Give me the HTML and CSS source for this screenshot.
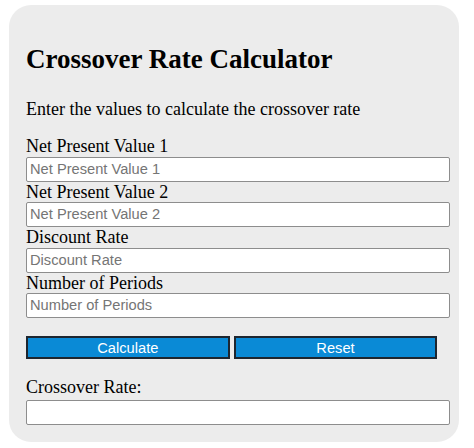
FILE: index.html
```html
<!DOCTYPE html>
<html lang="en">
<head>
    <meta charset="UTF-8">
    <meta name="viewport" content="width=device-width, initial-scale=1.0">
    <title>Crossover Rate Calculator</title>
    <link rel="stylesheet" href="styles.css">
</head>
<body>

    <div class="calculator">
        <h2>Crossover Rate Calculator</h2>
        <p class="intro">Enter the values to calculate the crossover rate</p>

        <div class="field">
            <label for="npv1">Net Present Value 1</label>
            <input type="number" id="npv1" placeholder="Net Present Value 1">
        </div>
        <div class="field">
            <label for="npv2">Net Present Value 2</label>
            <input type="number" id="npv2" placeholder="Net Present Value 2">
        </div>
        <div class="field">
            <label for="rate">Discount Rate</label>
            <input type="number" id="rate" placeholder="Discount Rate">
        </div>
        <div class="field">
            <label for="periods">Number of Periods</label>
            <input type="number" id="periods" placeholder="Number of Periods">
        </div>

        <div class="buttons">
            <button id="calculateButton">Calculate</button>
            <button id="resetButton">Reset</button>
        </div>

        <div class="field result">
            <label for="result">Crossover Rate:</label>
            <input type="text" id="result" readonly>
        </div>
    </div>

    <script>
        const npv1 = document.getElementById("npv1");
        const npv2 = document.getElementById("npv2");
        const rate = document.getElementById("rate");
        const periods = document.getElementById("periods");
        const result = document.getElementById("result");

        // Rate at which the two NPVs are equal (simple approximation)
        function calculate() {
            const a = parseFloat(npv1.value);
            const b = parseFloat(npv2.value);
            const r = parseFloat(rate.value) / 100;
            const n = parseFloat(periods.value);
            if ([a, b, r, n].some(isNaN) || n === 0 || b === 0) {
                result.value = "";
                return;
            }
            const crossover = (Math.pow(a / b, 1 / n) * (1 + r) - 1) * 100;
            result.value = crossover.toFixed(2) + "%";
        }

        function reset() {
            [npv1, npv2, rate, periods, result].forEach(input => input.value = "");
        }

        document.getElementById("calculateButton").addEventListener("click", calculate);
        document.getElementById("resetButton").addEventListener("click", reset);
    </script>

</body>
</html>
```

FILE: styles.css
```css
body {
    margin: 0;
    background-color: #fff;
    font-family: "Liberation Serif", "Times New Roman", serif;
    color: #000;
}

.calculator {
    width: 416px;
    margin: 5px 0 0 9px;
    padding: 17px;
    background-color: #ececec;
    border-radius: 22px;
}

.calculator h2 {
    margin: 22px 0 24px;
    font-size: 27px;
    font-weight: bold;
}

.intro {
    margin: 0 0 16px;
    font-size: 18px;
}

.field label {
    display: block;
    font-size: 18px;
    line-height: 20.5px;
}

.field input {
    display: block;
    width: 100%;
    margin: 0;
    padding: 3px 3px;
    border: 1px solid #8d8d8d;
    border-radius: 2px;
    background-color: #fff;
    font-family: "Liberation Sans", Arial, sans-serif;
    font-size: 14.67px;
    line-height: 17px;
    height: 17px;
}

.field input::placeholder {
    color: #757575;
}

.buttons {
    display: flex;
    gap: 4px;
    margin-top: 18px;
}

.buttons button {
    box-sizing: content-box;
    width: 48%;
    height: 19px;
    padding: 0;
    background-color: #0a8ad6;
    color: #fff;
    border: 2px solid #1d2630;
    font-family: "Liberation Sans", Arial, sans-serif;
    font-size: 14.67px;
    cursor: pointer;
}

.result {
    margin-top: 18px;
}

.result label {
    margin-bottom: 2px;
}
```
